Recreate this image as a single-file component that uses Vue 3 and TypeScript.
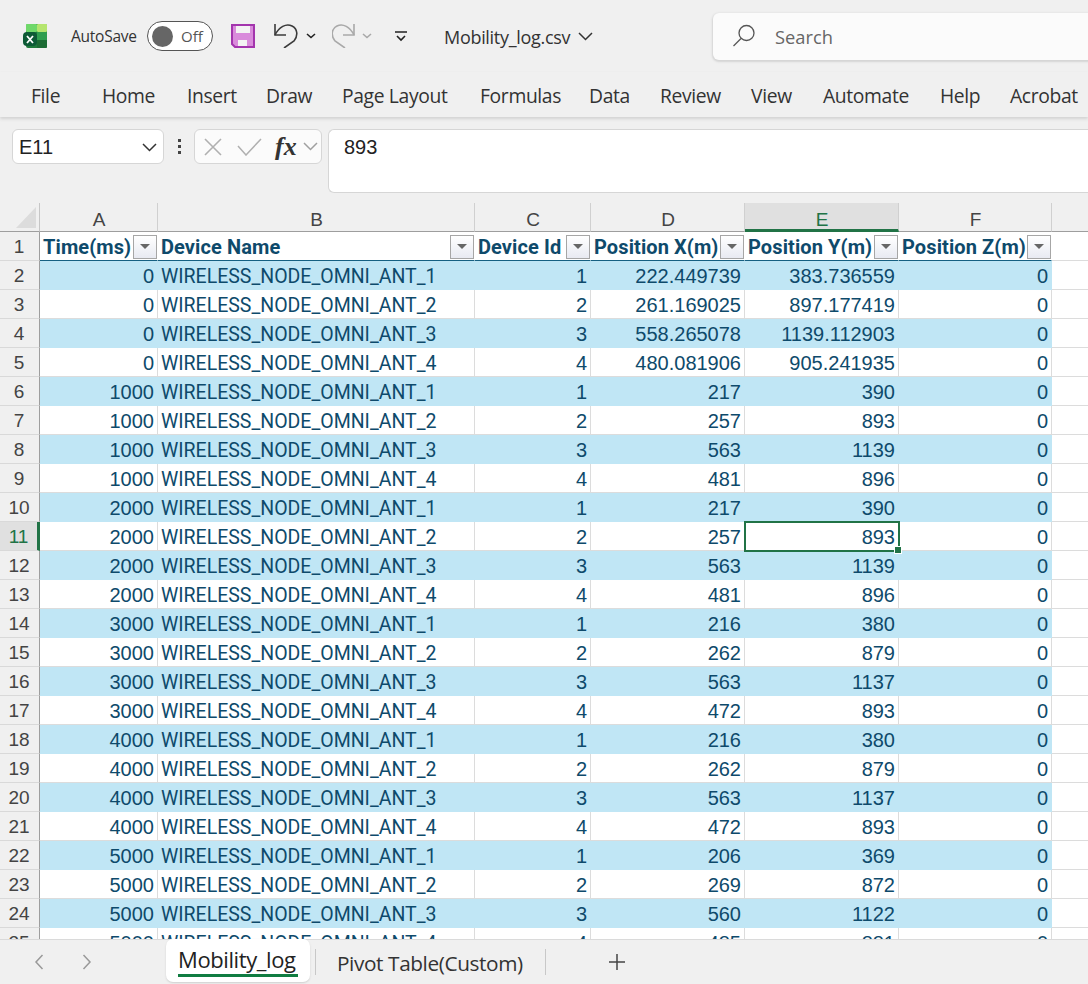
<script setup lang="ts">
const tabs: string[] = ['File','Home','Insert','Draw','Page Layout','Formulas','Data','Review','View','Automate','Help','Acrobat']
const columns: string[] = ['A','B','C','D','E','F','']
const heads: string[] = ['Time(ms)','Device Name','Device Id','Position X(m)','Position Y(m)','Position Z(m)']
const N = 'WIRELESS_NODE_OMNI_ANT_'
type Row = [string, number, string, string]
const raw: Row[] = [
  ['0',1,'222.449739','383.736559'],['0',2,'261.169025','897.177419'],['0',3,'558.265078','1139.112903'],['0',4,'480.081906','905.241935'],
  ['1000',1,'217','390'],['1000',2,'257','893'],['1000',3,'563','1139'],['1000',4,'481','896'],
  ['2000',1,'217','390'],['2000',2,'257','893'],['2000',3,'563','1139'],['2000',4,'481','896'],
  ['3000',1,'216','380'],['3000',2,'262','879'],['3000',3,'563','1137'],['3000',4,'472','893'],
  ['4000',1,'216','380'],['4000',2,'262','879'],['4000',3,'563','1137'],['4000',4,'472','893'],
  ['5000',1,'206','369'],['5000',2,'269','872'],['5000',3,'560','1122'],['5000',4,'485','881'],
]
</script>

<template>
  <div class="app">
    <header class="titlebar">
      <svg class="logo" width="24" height="24" viewBox="0 0 24 24">
        <rect x="3" y="0" width="21" height="24" rx="2" fill="#1f7a3c"/>
        <rect x="3" y="0" width="11" height="8" rx="1" fill="#6fd86a"/>
        <rect x="14" y="0" width="10" height="8" rx="1" fill="#b5e56e"/>
        <rect x="14" y="8" width="10" height="8" fill="#2f9e4f"/>
        <rect x="14" y="16" width="10" height="8" rx="1" fill="#1c6b34"/>
        <rect x="0" y="8" width="14" height="14" rx="4" fill="#0d5a36"/>
        <path d="M4 12l6 7M10 12l-6 7" stroke="#fff" stroke-width="1.800"/>
      </svg>
      <span class="autosave">AutoSave</span>
      <span class="toggle"><i class="knob"></i><span>Off</span></span>
      <svg class="save" width="24" height="24" viewBox="0 0 24 24">
        <path d="M1 1h22v22H4l-3-3z" fill="#d98bdb" stroke="#a335ad" stroke-width="2"/>
        <rect x="5" y="2" width="14" height="7" fill="#f3f3f3"/>
        <rect x="7" y="16" width="9" height="6" fill="#f3f3f3"/>
      </svg>
      <svg class="undo" width="24" height="24" viewBox="0 0 24 24" fill="none" stroke="#3b3b3b" stroke-width="1.600">
        <path d="M1 0v11h11"/><path d="M1 11C5 3 12-1 18 2c6 3 6 10 2 15l-10 7"/>
      </svg>
      <svg class="chev c1" width="10" height="6" viewBox="0 0 10 6" fill="none" stroke="#222" stroke-width="1.600"><path d="M1 1l4 3.500L9 1"/></svg>
      <svg class="redo" width="24" height="24" viewBox="0 0 24 24" fill="none" stroke="#a9a9a9" stroke-width="1.600">
        <path d="M22 0v11H11"/><path d="M22 11C18 3 11-1 5 2c-6 3-6 10-2 15l10 7"/>
      </svg>
      <svg class="chev c2" width="10" height="6" viewBox="0 0 10 6" fill="none" stroke="#a9a9a9" stroke-width="1.600"><path d="M1 1l4 3.500L9 1"/></svg>
      <svg class="qat" width="12" height="11" viewBox="0 0 12 11" fill="none" stroke="#222" stroke-width="1.600"><path d="M0 1h12M2 5l4 4 4-4"/></svg>
      <span class="docname">Mobility_log.csv</span>
      <svg class="docchev" width="15" height="9" viewBox="0 0 15 9" fill="none" stroke="#333" stroke-width="1.500"><path d="M1 1l6.500 6.500L14 1"/></svg>
      <div class="search">
        <svg width="24" height="24" viewBox="0 0 24 24" fill="none" stroke="#555" stroke-width="1.300"><circle cx="14.500" cy="9" r="7.500"/><path d="M9 14.500L1.500 22"/></svg>
        <span>Search</span>
      </div>
    </header>

    <nav class="ribbon">
      <span v-for="t in tabs" :key="t">{{ t }}</span>
    </nav>

    <section class="formula">
      <div class="namebox">
        <span>E11</span>
        <svg width="15" height="9" viewBox="0 0 15 9" fill="none" stroke="#333" stroke-width="1.500"><path d="M1 1l6.500 6.500L14 1"/></svg>
      </div>
      <div class="dots"><i></i><i></i><i></i></div>
      <div class="fxbox">
        <svg width="20" height="20" viewBox="0 0 20 20" fill="none" stroke="#b0b0b0" stroke-width="1.600"><path d="M2 2l16 16M18 2L2 18"/></svg>
        <svg width="25" height="18" viewBox="0 0 25 18" fill="none" stroke="#b0b0b0" stroke-width="1.500"><path d="M1 8l8 9L24 1"/></svg>
        <span class="fx">fx</span>
        <svg width="15" height="9" viewBox="0 0 15 9" fill="none" stroke="#a0a0a0" stroke-width="1.500"><path d="M1 1l6.500 6.500L14 1"/></svg>
      </div>
      <div class="input">893</div>
    </section>

    <section class="sheet">
      <div class="grid">
        <div class="corner"><i></i></div>
        <div v-for="c in columns" :key="c" class="colhead" :class="{ sel: c === 'E' }">{{ c }}</div>

        <div class="rownum">1</div>
        <div v-for="h in heads" :key="h" class="cell head">
          <span>{{ h }}</span>
          <button class="filter" type="button"><i></i></button>
        </div>
        <div class="cell blank"></div>

        <template v-for="(r, i) in raw" :key="i">
          <div class="rownum" :class="{ active: i === 9 }">{{ i + 2 }}</div>
          <div class="cell num" :class="{ band: i % 2 === 0 }">{{ r[0] }}</div>
          <div class="cell txt" :class="{ band: i % 2 === 0 }">{{ N }}{{ r[1] }}</div>
          <div class="cell num" :class="{ band: i % 2 === 0 }">{{ r[1] }}</div>
          <div class="cell num" :class="{ band: i % 2 === 0 }">{{ r[2] }}</div>
          <div class="cell num" :class="{ band: i % 2 === 0, current: i === 9 }">{{ r[3] }}<i v-if="i === 9" class="handle"></i></div>
          <div class="cell num" :class="{ band: i % 2 === 0 }">0</div>
          <div class="cell blank"></div>
        </template>
      </div>
    </section>

    <footer class="tabs">
      <svg class="nav" width="10" height="16" viewBox="0 0 10 16" fill="none" stroke="#999" stroke-width="1.500"><path d="M8.500 1L2 8l6.500 7"/></svg>
      <svg class="nav next" width="10" height="16" viewBox="0 0 10 16" fill="none" stroke="#999" stroke-width="1.500"><path d="M1.500 1L8 8l-6.500 7"/></svg>
      <div class="tab active"><span>Mobility_log</span></div>
      <i class="sep first"></i>
      <div class="tab">Pivot Table(Custom)</div>
      <i class="sep"></i>
      <svg class="plus" width="18" height="18" viewBox="0 0 18 18" stroke="#444" stroke-width="1.500"><path d="M9 1v16M1 9h16"/></svg>
    </footer>
  </div>
</template>

<style>
html, body { margin: 0; background: #f0f0f0; overflow: hidden; }
</style>

<style scoped>
.app {
  width: 1088px; height: 984px; overflow: hidden; display: flex; flex-direction: column;
  background: #f0f0f0; color: #333; font-family: "Open Sans", "Noto Sans", sans-serif;
}
.titlebar { height: 72px; flex: none; display: flex; align-items: center; padding-left: 23px; }
.autosave { margin-left: 24px; width: 66px; font-size: 15.500px; letter-spacing: -0.250px; color: #333; white-space: nowrap; }
.toggle {
  margin-left: 10px; width: 66px; height: 30px; box-sizing: border-box; border: 1px solid #555; border-radius: 15px;
  background: #fff; display: flex; align-items: center; padding-left: 4px; font-size: 15px; color: #555;
}
.knob { width: 21px; height: 21px; border-radius: 50%; background: #666; margin-right: 8px; }
.save { margin-left: 18px; }
.undo { margin-left: 19px; }
.chev.c1 { margin-left: 8px; }
.redo { margin-left: 16px; }
.chev.c2 { margin-left: 6px; }
.qat { margin-left: 23px; }
.docname { margin-left: 37px; width: 126px; font-size: 18px; letter-spacing: -0.300px; color: #333; white-space: nowrap; padding-top: 1px; }
.docchev { margin-left: 8px; }
.search {
  margin-left: 120px; flex: 1; height: 47px; box-sizing: border-box; margin-right: -20px;
  background: #fbfbfb; border-radius: 6px; box-shadow: 0 1px 2px 1px #d4d4d4;
  display: flex; align-items: center; padding-left: 19px; gap: 19px; font-size: 18.300px; color: #666;
}
.ribbon {
  height: 45px; flex: none; box-sizing: border-box; display: grid; align-items: center; padding: 2px 0 0 31px;
  grid-template-columns: 71px 85px 79px 76px 138px 109px 71px 91px 72px 117px 70px 78px;
  font-size: 19.300px; letter-spacing: -0.350px; color: #333; white-space: nowrap;
  box-shadow: 0 2px 3px #d2d2d2; position: relative;
}
.formula { height: 86px; flex: none; box-sizing: border-box; padding-top: 12px; display: flex; align-items: flex-start; }
.namebox {
  margin-left: 12px; width: 152px; height: 35px; box-sizing: border-box; background: #fff; border: 1px solid #d6d6d6; border-radius: 6px;
  display: flex; align-items: center; justify-content: space-between; padding: 1px 6px 0 6px;
  font: 20px "Liberation Sans", sans-serif; color: #222;
}
.dots { width: 30px; height: 35px; display: flex; flex-direction: column; align-items: center; justify-content: center; gap: 3px; }
.dots i { width: 3px; height: 3px; background: #444; }
.fxbox {
  width: 128px; height: 35px; box-sizing: border-box; background: #fbfbfb; border: 1px solid #d6d6d6; border-radius: 6px;
  display: flex; align-items: center; padding-left: 8px;
}
.fxbox svg:nth-child(2) { margin-left: 14px; }
.fx { font: italic 700 26px "Liberation Serif", serif; color: #333; margin-left: 13px; width: 28px; line-height: 30px; }
.input {
  margin-left: 6px; flex: 1; height: 64px; box-sizing: border-box; background: #fff; border: 1px solid #d6d6d6; border-right: 0; border-radius: 6px 0 0 6px;
  padding: 6px 0 0 15px; font: 20px "Liberation Sans", sans-serif; color: #222;
}
.sheet { flex: 1; min-height: 0; overflow: hidden; background: #fff; position: relative; }
.grid {
  display: grid; grid-template-columns: 40px 118px 317px 116px 154px 154px 153px 36px; grid-auto-rows: 29px;
  font: 20px "Liberation Sans", sans-serif;
}
.corner { background: #f0f0f0; border-bottom: 1px solid #9e9e9e; border-right: 1px solid #c6c6c6; box-sizing: border-box; position: relative; }
.corner i { position: absolute; left: 16px; top: 4px; width: 20px; height: 21px; background: #dcdcdc; clip-path: polygon(100% 0, 100% 100%, 0 100%); }
.colhead {
  background: #f0f0f0; box-sizing: border-box; border-right: 1px solid #d0d0d0; border-bottom: 1px solid #9e9e9e;
  display: flex; align-items: center; justify-content: center; font-size: 19px; color: #444; padding: 5px 0 0 1px;
}
.colhead:nth-child(8) { border-right: 0; }
.colhead.sel { background: #e0e0e0; border-bottom: 3px solid #217346; color: #217346; padding-top: 7px; }
.rownum {
  background: #f0f0f0; box-sizing: border-box; border-right: 1px solid #9e9e9e; border-bottom: 1px solid #d9d9d9;
  display: flex; align-items: center; justify-content: center; font-size: 19px; color: #444; padding: 2px 1px 0 0;
}
.rownum.active { background: #e0e0e0; border-right: 3px solid #217346; color: #217346; padding-right: 0; }
.cell {
  box-sizing: border-box; background: #fff; border-right: 1px solid #dcdcdc; border-bottom: 1px solid #dcdcdc;
  color: #0e4a6b; white-space: nowrap; overflow: hidden; display: flex; align-items: center; position: relative; padding-top: 2px;
}
.cell.band { background: #c0e6f5; border-color: #c0e6f5; }
.cell.num { justify-content: flex-end; padding-right: 3px; }
.cell.txt { padding-left: 3px; font-family: Roboto, sans-serif; font-size: 19.500px; }
.cell.head {
  font-family: Roboto, sans-serif; font-weight: 700; font-size: 20px; padding: 1px 0 0 3px; border-right-color: #fff; border-bottom: 1px solid #156082;
  justify-content: space-between; letter-spacing: 0.100px;
}
.cell.blank { border-right: 0; }
.filter {
  width: 24px; height: 24px; padding: 0; box-sizing: border-box; border: 1px solid #a6a6a6; background: linear-gradient(#fff, #e8eaf2);
  display: flex; align-items: center; justify-content: center; flex: none;
}
.filter i { width: 0; height: 0; border-left: 5px solid transparent; border-right: 5px solid transparent; border-top: 5px solid #666; }
.cell.current { overflow: visible; outline: 2px solid #217346; outline-offset: -1px; z-index: 2; }
.handle { position: absolute; right: -3px; bottom: -3px; width: 6px; height: 6px; background: #217346; outline: 1px solid #fff; }
.tabs {
  height: 45px; flex: none; box-sizing: border-box; border-top: 1px solid #dadada; display: flex; align-items: flex-start; background: #f0f0f0; position: relative;
}
.nav { margin: 14px 0 0 34px; }
.nav.next { margin-left: 38px; }
.tab { font-size: 20.800px; letter-spacing: -0.400px; color: #333; padding-top: 9px; margin-left: 21px; white-space: nowrap; }
.tab.active {
  margin: -1px 0 0 74px; padding: 6px 12px 0 12px; width: 144px; height: 43px; box-sizing: border-box; background: #fff; border-radius: 7px;
  box-shadow: 0 1px 2px #cfcfcf; font-size: 22px; font-weight: 500; color: #222;
}
.tab.active span { display: block; border-bottom: 3px solid #107c41; line-height: 29px; }
.sep { width: 1px; height: 26px; background: #c8c8c8; margin: 9px 0 0 22px; }
.sep.first { margin-left: 5px; }
.plus { margin: 13px 0 0 62px; }
</style>
